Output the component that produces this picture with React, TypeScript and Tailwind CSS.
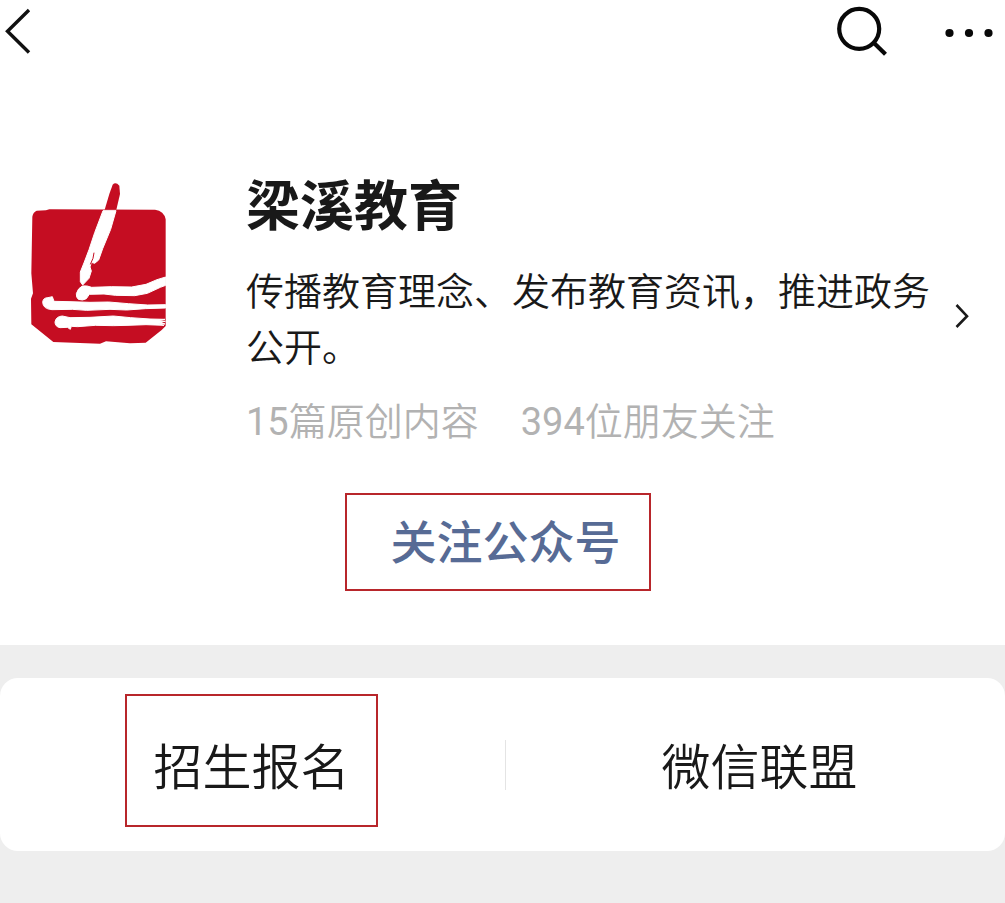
function BackIcon() {
  return (
    <svg width="40" height="64" viewBox="0 0 40 64" fill="none" stroke="#111" strokeWidth="3.4" aria-hidden="true">
      <path d="M29 10 7.500 31.200 29 52.500" />
    </svg>
  );
}

function SearchIcon() {
  return (
    <svg width="56" height="64" viewBox="0 0 56 64" fill="none" stroke="#080808" strokeWidth="4.200" aria-hidden="true">
      <circle cx="26.200" cy="28.800" r="20" />
      <path d="M40 42 52.500 54.200" />
    </svg>
  );
}

function MoreIcon() {
  return (
    <svg width="56" height="64" viewBox="0 0 56 64" fill="#080808" aria-hidden="true">
      <circle cx="8.500" cy="33" r="4.100" />
      <circle cx="28" cy="33" r="4.100" />
      <circle cx="47.500" cy="33" r="4.100" />
    </svg>
  );
}

function ChevronIcon() {
  return (
    <svg width="18" height="28" viewBox="0 0 18 28" fill="none" stroke="#1a1a1a" strokeWidth="2.600" aria-hidden="true" className="mb-2 shrink-0">
      <path d="M3.500 3 14 14.200 3.500 25" />
    </svg>
  );
}

function Logo() {
  return (
    <svg width="160" height="185" viewBox="0 0 480 555" role="img" aria-label="梁溪教育" className="shrink-0">
      <path
        fill="#c50d22"
        d="M50 122 78 121 88 118 405 119Q432 122 437 148V468L425 480 377 518 330 520 258 514 240 521 100 516 34 463 33 386 39 370 34 310 37 140Q39 127 50 122Z"
      />
      <path fill="#c50d22" d="M254 119 268 72 278 44Q287 34 298 47L300 72 289 119Z" />
      <g fill="#fff" stroke="#fff" strokeWidth="3" strokeLinejoin="round">
        <path d="M249 122H288L272 178 248 236 236 270 224 280 214 277 210 291 214 303 207 325 188 345 181 335 181 306 193 276 207 239 224 188Z" />
        <path d="M187 348Q202 346 215 352L274 350 335 351 378 343 411 329 437 321V346L421 352 382 370 344 377 286 376 252 372 208 373 199 386Q188 393 175 388 168 382 169 371 174 354 187 348Z" />
        <path d="M68 397Q69 383 84 383L97 380 102 394 150 395 210 397 266 396 325 401 383 405 437 404V414L376 416 320 420 270 418 200 421 157 418 96 419Q69 417 68 397Z" />
        <path d="M105 456Q108 439 127 438L150 443 210 442 280 438 332 443 390 447 435 448 413 451 436 454 420 456 435 462 415 461 432 466 378 464 324 466 280 467 226 466 173 470 154 469 151 478 142 472 120 473Q105 470 105 456Z" />
      </g>
      <path stroke="#c50d22" strokeWidth="3" fill="none" d="M222 248 219 265 211 283" />
    </svg>
  );
}

export default function App() {
  return (
    <div
      lang="zh-CN"
      className="flex min-h-screen flex-col bg-[#eeeeee] font-['Roboto','Noto_Sans_CJK_SC',sans-serif] text-[#191919]"
    >
      <main className="bg-white pb-[54px]">
        <header className="flex items-center justify-between pr-2">
          <button type="button" aria-label="返回">
            <BackIcon />
          </button>
          <div className="flex gap-13">
            <button type="button" aria-label="搜索">
              <SearchIcon />
            </button>
            <button type="button" aria-label="更多">
              <MoreIcon />
            </button>
          </div>
        </header>

        <section className="flex items-start pt-[106px] pr-[34px] pl-5">
          <Logo />
          <div className="ml-[66px] min-w-0 flex-1 pt-0.5">
            <h1 className="text-[54px] leading-[72px] font-bold">梁溪教育</h1>
            <a href="#profile" className="mt-5 flex items-center justify-between font-[350]">
              <span className="text-[38px] leading-[56px]">传播教育理念、发布教育资讯，推进政务公开。</span>
              <ChevronIcon />
            </a>
            <p className="mt-[18px] flex gap-[42px] text-[38px] leading-[56px] font-[350] text-[#b2b2b2]">
              <span>
                <span className="font-normal">15</span>篇原创内容
              </span>
              <span>
                <span className="font-normal">394</span>位朋友关注
              </span>
            </p>
          </div>
        </section>

        <div className="mt-[43px] flex justify-center pr-2.5">
          <button
            type="button"
            className="border-2 border-[#b8262b] pt-[14px] pr-7 pb-3 pl-[44px] text-[46px] leading-[68px] font-medium text-[#576b95]"
          >
            关注公众号
          </button>
        </div>
      </main>

      <nav className="mt-[33px] flex items-center rounded-[18px] bg-white pt-4 pb-6 pl-0.5 text-[49px] font-[350]">
        <div className="flex flex-1 justify-center pr-1">
          <button type="button" className="border-2 border-[#b8262b] px-[26px] pt-[37px] pb-[20px] leading-[72px]">
            招生报名
          </button>
        </div>
        <div className="mt-2 h-[50px] w-px bg-[#e4e4e4]" />
        <div className="flex flex-1 justify-center">
          <button type="button" className="pt-[39px] pb-[22px] pl-2 leading-[72px]">
            微信联盟
          </button>
        </div>
      </nav>
    </div>
  );
}
